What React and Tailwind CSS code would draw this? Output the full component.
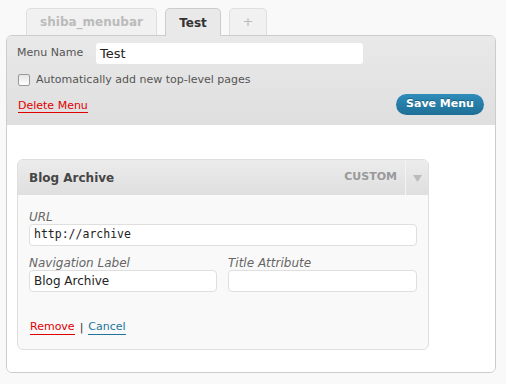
import React from 'react';

const font = { fontFamily: '"DejaVu Sans", Verdana, sans-serif' };

const Tab = ({ label, active, width }) => (
  <div
    className={
      (active
        ? 'h-[28px] border-[#cccccc] bg-[#e9e9e9] text-[#333] -mb-px relative z-10'
        : 'h-[27px] border-[#dfdfdf] bg-[#f1f1f1] text-[#bbbbbb]') +
      ' flex items-center justify-center rounded-t-[5px] border border-b-0 font-bold text-[12px] ' +
      width
    }
  >
    {label}
  </div>
);

export default function App() {
  return (
    <div className="w-[506px] h-[384px] bg-[#f9f9f9] text-[11px] text-[#333]" style={font}>
      <div className="flex items-end gap-[8px] pl-[26px] pt-[8px]">
        <Tab label="shiba_menubar" width="w-[131px]" />
        <Tab label="Test" active width="w-[56px]" />
        <Tab label={<span className="font-normal text-[#bbb] text-[13px]">+</span>} width="w-[38px]" />
      </div>

      <div className="ml-[6px] w-[490px] border border-[#cccccc] rounded-[6px] overflow-hidden">
        <div className="bg-gradient-to-b from-[#e9e9e9] to-[#dfdfdf] border-b border-[#dfdfdf] px-[10px] pt-[7px] pb-[9px]">
          <div className="flex items-center h-[21px]">
            <span className="w-[79px] text-[#555]">Menu Name</span>
            <div className="w-[267px] h-[21px] bg-white rounded-[3px] flex items-center px-[4px] text-[13px] text-[#222]">Test</div>
          </div>
          <div className="flex items-center mt-[10px] h-[12px]">
            <span className="w-[12px] h-[12px] ml-[1px] border border-[#999] rounded-[2px] bg-gradient-to-b from-[#e6e6e6] to-white" />
            <span className="ml-[6px] text-[#555]">Automatically add new top-level pages</span>
          </div>
          <div className="flex items-center justify-between mt-[8px] h-[21px]">
            <span className="ml-[1px] text-[#e00000] border-b border-[#e00000] leading-[13px] pt-[2px]">Delete Menu</span>
            <button
              className="w-[88px] h-[21px] mr-[1px] rounded-full bg-gradient-to-b from-[#2e8cb9] to-[#1e6f96] text-white font-bold text-[11px] flex items-center justify-center"
              style={{ ...font, textShadow: '0 -1px 0 rgba(0,0,0,0.3)' }}
            >
              Save Menu
            </button>
          </div>
        </div>

        <div className="bg-white px-[10px] pt-[34px] pb-[22px]">
          <div className="w-[412px] border border-[#dfdfdf] rounded-[6px] overflow-hidden bg-[#f9f9f9]">
            <div className="h-[35px] bg-gradient-to-b from-[#ececec] to-[#dfdfdf] flex items-center">
              <span className="flex-1 pl-[11px] font-bold text-[12px] text-[#464646]">Blog Archive</span>
              <span className="font-bold text-[11px] text-[#999] pr-[8px]">CUSTOM</span>
              <div className="h-full w-[23px] border-l border-[#f3f3f3] flex items-center justify-center">
                <svg width="9" height="8" viewBox="0 0 9 8">
                  <path d="M0 1 L9 1 L4.5 8 Z" fill="#bbbbbb" />
                </svg>
              </div>
            </div>
            <div className="px-[11px] pt-[15px] pb-[14px]">
              <div className="italic text-[#666] text-[12px] leading-[14px]">URL</div>
              <div className="h-[22px] bg-white border border-[#dfdfdf] rounded-[4px] flex items-center px-[4px] text-[#222]" style={{ fontFamily: '"DejaVu Sans Mono", monospace', fontSize: '11.5px' }}>
                http://archive
              </div>
              <div className="flex gap-[11px] mt-[10px]">
                <div className="w-[188px]">
                  <div className="italic text-[#666] text-[12px] leading-[14px]">Navigation Label</div>
                  <div className="h-[22px] bg-white border border-[#dfdfdf] rounded-[4px] flex items-center px-[4px] text-[12px] text-[#222]">Blog Archive</div>
                </div>
                <div className="w-[189px]">
                  <div className="italic text-[#666] text-[12px] leading-[14px]">Title Attribute</div>
                  <div className="h-[22px] bg-white border border-[#dfdfdf] rounded-[4px]" />
                </div>
              </div>
              <div className="flex items-center mt-[28px] text-[11px] leading-[14px]">
                <span className="ml-[1px] text-[#e00000] border-b border-[#e00000]">Remove</span>
                <span className="mx-[5px] text-[#333]">|</span>
                <span className="text-[#21759b] border-b border-[#21759b]">Cancel</span>
              </div>
            </div>
          </div>
        </div>
      </div>
    </div>
  );
}
